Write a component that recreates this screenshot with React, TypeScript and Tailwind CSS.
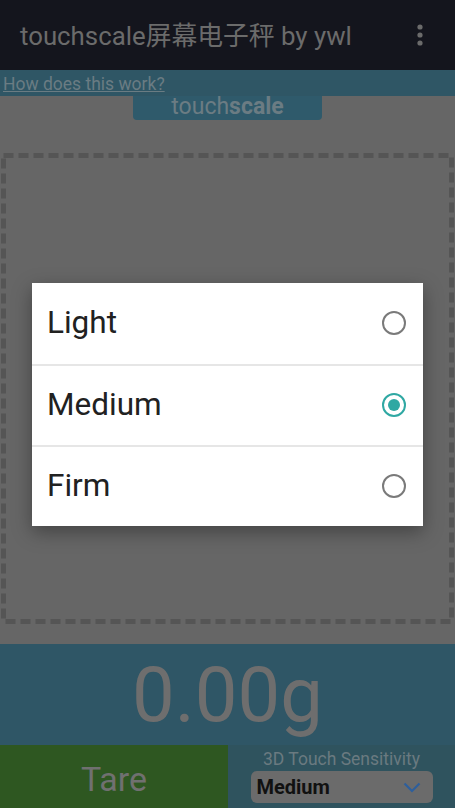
import { useState } from "react";

const options = ["Light", "Medium", "Firm"];

function Radio({ checked }: { checked: boolean }) {
  return (
    <span
      className={`flex h-[24px] w-[24px] items-center justify-center rounded-full border-[2px] ${
        checked ? "border-[#2fa8a3]" : "border-[#7a7a7a]"
      }`}
    >
      {checked && <span className="h-[12px] w-[12px] rounded-full bg-[#2fa8a3]" />}
    </span>
  );
}

function MoreIcon() {
  return (
    <svg width="6" height="22" viewBox="0 0 6 22" fill="#6b6b6b">
      <circle cx="3" cy="3" r="2.6" />
      <circle cx="3" cy="11" r="2.6" />
      <circle cx="3" cy="19" r="2.6" />
    </svg>
  );
}

export default function App() {
  const [sensitivity, setSensitivity] = useState("Medium");

  return (
    <div
      className="relative flex h-[808px] w-full flex-col overflow-hidden bg-[#666666]"
      style={{ fontFamily: "Roboto, 'Noto Sans CJK SC', sans-serif" }}
    >
      {/* app bar */}
      <div className="flex h-[70px] items-center justify-between bg-[#14151d] pl-[20px] pr-[32px]">
        <span className="pt-[2px] text-[25.8px] text-[#6b6b6b]">touchscale屏幕电子秤 by ywl</span>
        <MoreIcon />
      </div>

      {/* help link */}
      <div className="flex h-[26px] items-end bg-[#2f5665] px-[3px]">
        <span className="pb-[1px] text-[17.5px] leading-[22px] text-[#6a7c83] underline">How does this work?</span>
      </div>

      {/* scale area */}
      <div className="flex flex-1 flex-col bg-[#666666]">
        <div className="mx-auto flex h-[24px] w-[189px] items-center justify-center rounded-b-[4px] bg-[#2f5a6b] pb-[4px] text-[23px] leading-none text-[#6b7c83]">
          touch<span className="font-bold">scale</span>
        </div>
        <div className="relative mx-[1px] mb-[20px] mt-[33px] flex-1">
          <svg className="absolute inset-0 h-full w-full" preserveAspectRatio="none">
            <rect
              x="2.5"
              y="2.5"
              width="calc(100% - 5px)"
              height="calc(100% - 5px)"
              fill="none"
              stroke="#555555"
              strokeWidth="5"
              strokeDasharray="10 5"
            />
          </svg>
        </div>
      </div>

      {/* weight readout */}
      <div className="flex h-[101px] items-center justify-center bg-[#2f5666]">
        <span className="text-[76px] leading-none text-[#6e6e6e]">0.00g</span>
      </div>

      {/* bottom controls */}
      <div className="flex h-[63px]">
        <div className="flex w-[228px] items-center justify-center bg-[#2e5721] pt-[5px] text-[34px] text-[#707070]">
          Tare
        </div>
        <div className="flex flex-1 flex-col items-center bg-[#2f535e] pt-[5px]">
          <span className="text-[17.5px] leading-[19px] text-[#6a7a80]">3D Touch Sensitivity</span>
          <div className="mt-[2px] flex h-[32px] w-[182px] items-center justify-between rounded-[6px] bg-[#6b6b6b] pl-[6px] pr-[12px]">
            <span className="text-[20px] font-bold text-[#111111]">{sensitivity}</span>
            <svg width="18" height="11" viewBox="0 0 18 11" fill="none" stroke="#2d5f9c" strokeWidth="2.2">
              <path d="M1.5 1.5 9 9l7.5-7.5" />
            </svg>
          </div>
        </div>
      </div>

      {/* sensitivity picker */}
      <div className="absolute inset-0 flex items-center justify-center">
        <div className="w-[391px] bg-white shadow-[0_6px_18px_rgba(0,0,0,0.35)]">
          {options.map((opt, i) => (
            <button
              key={opt}
              onClick={() => setSensitivity(opt)}
              className={`flex h-[81px] w-full items-center justify-between pl-[15px] pr-[17px] ${
                i > 0 ? "border-t-[2px] border-[#e6e6e6]" : ""
              }`}
            >
              <span className="text-[31.5px] text-[#212121]">{opt}</span>
              <Radio checked={opt === sensitivity} />
            </button>
          ))}
        </div>
      </div>
    </div>
  );
}
